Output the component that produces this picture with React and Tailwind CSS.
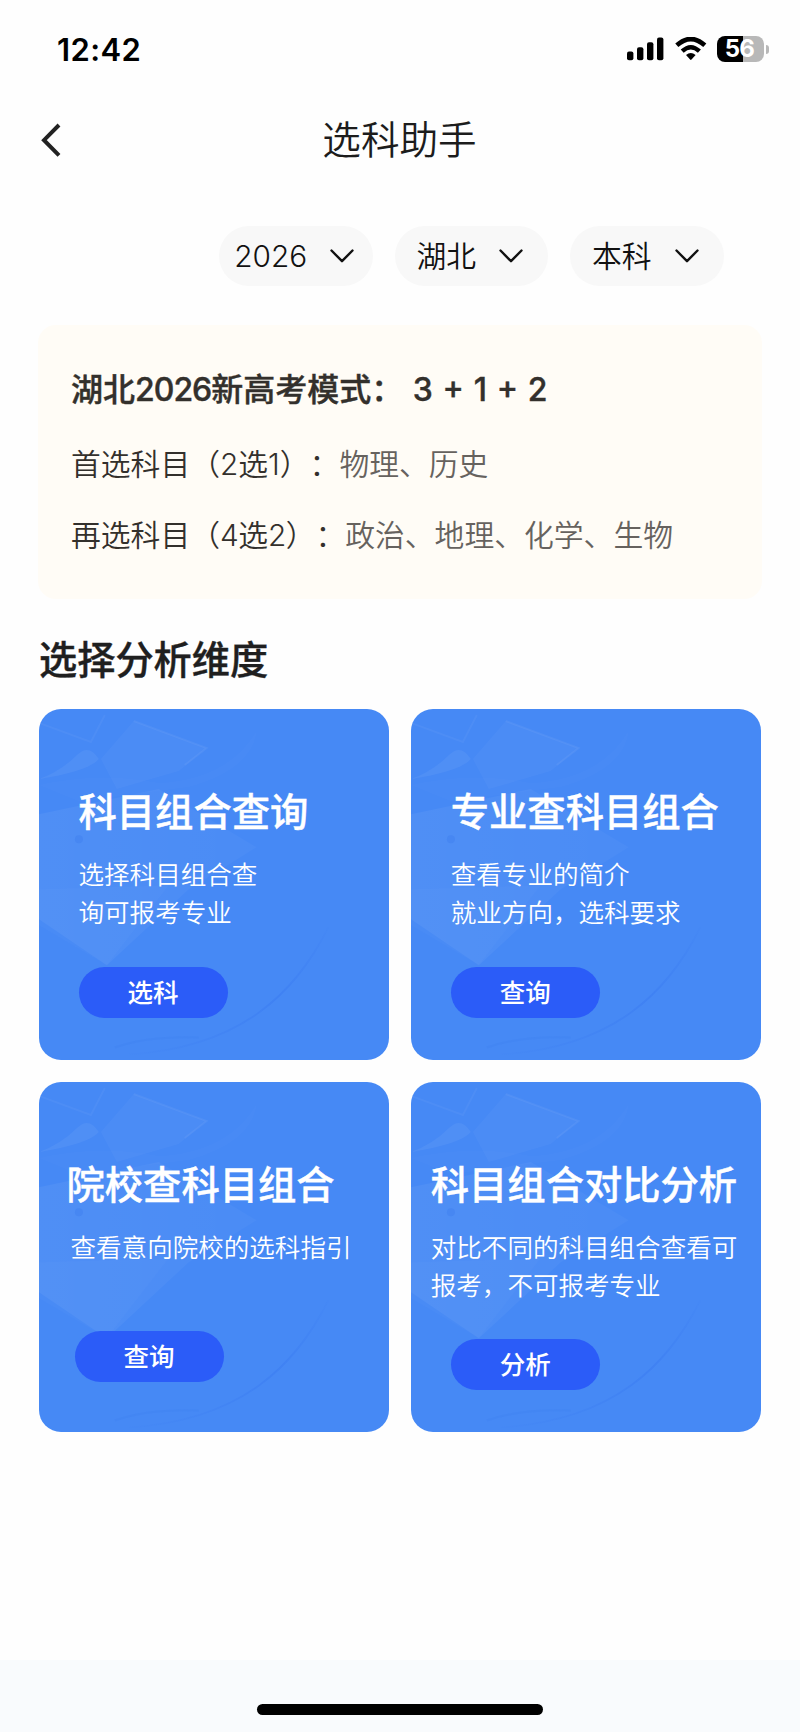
import React from 'react';

const filters = ['2026', '湖北', '本科'];

const cards = [
  {
    title: '科目组合查询',
    lines: ['选择科目组合查', '询可报考专业'],
    action: '选科',
    titleClass: 'ml-10',
    descClass: 'ml-10',
    buttonClass: 'ml-10 mt-[34px]',
  },
  {
    title: '专业查科目组合',
    lines: ['查看专业的简介', '就业方向，选科要求'],
    action: '查询',
    titleClass: 'ml-10',
    descClass: 'ml-10',
    buttonClass: 'ml-10 mt-[34px]',
  },
  {
    title: '院校查科目组合',
    lines: ['查看意向院校的选科指引'],
    action: '查询',
    titleClass: 'ml-7',
    descClass: 'ml-8',
    buttonClass: 'ml-9 mt-[64px]',
  },
  {
    title: '科目组合对比分析',
    lines: ['对比不同的科目组合查看可', '报考，不可报考专业'],
    action: '分析',
    titleClass: 'ml-5',
    descClass: 'ml-5',
    buttonClass: 'ml-10 mt-[34px]',
  },
];

function StatusBar() {
  return (
    <div className="h-[98px] pl-[57px] pr-[31px] flex items-center justify-between text-black">
      <span className="text-[31px] font-semibold leading-none tracking-[0.4px]">12:42</span>
      <div className="flex items-center">
        <svg width="37" height="24" viewBox="0 0 37 24">
          <rect x="0" y="14.5" width="6.4" height="8.7" rx="2" />
          <rect x="10" y="10.2" width="6.4" height="13" rx="2" />
          <rect x="20" y="5.2" width="6.4" height="18" rx="2" />
          <rect x="30" y="0.4" width="6.4" height="22.8" rx="2" />
        </svg>
        <svg className="ml-[11px]" width="32" height="24" viewBox="0 0 32 24">
          <path d="M1.8 8.3 Q15.8 -4.3 29.8 8.3" fill="none" stroke="#000" strokeWidth="4.6" />
          <path d="M7.2 14.2 Q15.8 6.2 24.4 14.2" fill="none" stroke="#000" strokeWidth="4.4" />
          <path d="M11 17.9 Q15.8 14.2 20.6 17.9 L16.5 22.6 Q15.8 23.3 15.1 22.6 Z" />
        </svg>
        <div className="ml-[10px] w-[47px] h-[26px] rounded-[8px] bg-[linear-gradient(to_right,#000_56%,#b8b8b8_56%)] flex items-center justify-center pr-[2px] text-white text-[24px] font-bold leading-none tracking-[-0.8px]">
          56
        </div>
        <div className="ml-[2px] w-[3px] h-[9px] rounded-r-full bg-[#b8b8b8]" />
      </div>
    </div>
  );
}

function ChevronDown() {
  return (
    <svg width="24" height="14" viewBox="0 0 24 14" fill="none" stroke="#111" strokeWidth="2.4" strokeLinecap="round" strokeLinejoin="round">
      <path d="M1.5 1.5 L12 12.2 L22.5 1.5" />
    </svg>
  );
}

// Faint graduation cap and swoosh behind the card text
function CardArt() {
  return (
    <svg className="absolute inset-0 w-full h-full" viewBox="0 0 351 350" preserveAspectRatio="none" fill="none">
      <defs>
        <linearGradient id="swoosh" x1="0" y1="1" x2="1" y2="0">
          <stop offset="0" stopColor="#2563eb" stopOpacity="0.02" />
          <stop offset="0.6" stopColor="#2563eb" stopOpacity="0.2" />
          <stop offset="1" stopColor="#2563eb" stopOpacity="0.03" />
        </linearGradient>
        <linearGradient id="fold" x1="0" y1="0" x2="1" y2="0">
          <stop offset="0" stopColor="#fff" stopOpacity="0.05" />
          <stop offset="1" stopColor="#fff" stopOpacity="0.025" />
        </linearGradient>
      </defs>
      <path d="M95 12 L168 39 L140 62 L78 80 L62 50 Z" fill="#fff" fillOpacity="0.03" />
      <path d="M95 12 L168 39 L146 56" stroke="#fff" strokeOpacity="0.05" strokeWidth="2" />
      <path d="M0 14 L52 33 L66 6" stroke="#fff" strokeOpacity="0.04" strokeWidth="2" />
      <path d="M0 70 Q22 62 38 46 Q50 34 60 50 Q50 62 0 70 Z" fill="#fff" fillOpacity="0.05" />
      <path d="M0 76 Q60 62 120 74 Q190 70 218 22 Q214 60 150 78 L40 92 Z" fill="#fff" fillOpacity="0.015" />
      <path d="M0 105 L120 80 L218 138 L150 180 L68 256 L0 210 Z" fill="url(#fold)" />
      <path d="M0 180 L130 176 L68 256 L0 216 Z" fill="#fff" fillOpacity="0.02" />
      <circle cx="40" cy="130" r="4" fill="#1f5fe0" fillOpacity="0.14" />
      <path d="M290 218 C258 282 204 338 90 345" stroke="url(#swoosh)" strokeWidth="2" />
      <path d="M76 338 Q110 326 160 328" stroke="#2563eb" strokeOpacity="0.08" strokeWidth="2" />
    </svg>
  );
}

function DimensionCard({ card }) {
  return (
    <div className="relative h-[350.5px] rounded-[22px] overflow-hidden bg-[#4689f5] text-white">
      <CardArt />
      <div className="relative flex flex-col items-start pt-[79px]">
        <h3 className={`text-[38.3px] leading-[48px] font-medium whitespace-nowrap [-webkit-text-stroke:0.4px] ${card.titleClass}`}>{card.title}</h3>
        <div className={`mt-[20px] text-[25.55px] leading-[38.4px] font-[350] whitespace-nowrap ${card.descClass}`}>
          {card.lines.map((line) => (
            <p key={line}>{line}</p>
          ))}
        </div>
        <button className={`w-[149px] h-[51px] rounded-full bg-[#2b5cf8] text-[25.5px] leading-none font-medium ${card.buttonClass}`}>
          {card.action}
        </button>
      </div>
    </div>
  );
}

export default function App() {
  return (
    <div className="w-[800px] h-[1732px] bg-[#fefefe] flex flex-col overflow-hidden font-[Inter,'Noto_Sans_CJK_SC',sans-serif] [text-spacing-trim:space-all]">
      <StatusBar />

      <header className="h-[84px] grid grid-cols-[1fr_auto_1fr] items-center">
        <svg className="ml-[40px]" width="22" height="34" viewBox="0 0 22 34" fill="none" stroke="#222" strokeWidth="4">
          <path d="M19 2 L4 17.2 L19 32.4" />
        </svg>
        <h1 className="pt-px pr-px text-[38.6px] leading-none font-[350] text-[#1c1c1c]">选科助手</h1>
        <span />
      </header>

      <div className="mt-[44px] ml-[219px] flex gap-[22px]">
        {filters.map((label) => (
          <button key={label} className="w-[153.5px] h-[60px] rounded-full bg-[#f8f8f8] flex items-center justify-center gap-[23px] pr-[3px] text-[29.8px] font-[350] text-[#111]">
            {label}
            <ChevronDown />
          </button>
        ))}
      </div>

      <section className="mt-[39px] mx-[38px] h-[274px] rounded-[18px] bg-[#fffcf6] pl-[33px] pt-[41px] text-[#33302c] whitespace-nowrap">
        <h2 className="text-[32px] leading-[48px] font-medium [-webkit-text-stroke:0.4px]">
          湖北<span className="tracking-[-1px]">2026</span>新高考模式： <span className="ml-px [word-spacing:1.2px]">3 + 1 + 2</span>
        </h2>
        <p className="mt-[28px] text-[29.8px] leading-[44px] font-[350]">
          首选科目（2选1）：<span className="text-[#66625e]">物理、历史</span>
        </p>
        <p className="mt-[27px] text-[29.8px] leading-[44px] font-[350]">
          再选科目（<span className="tracking-[-0.6px]">4</span>选<span className="tracking-[-0.6px]">2</span>）：<span className="text-[#66625e]">政治、地理、化学、生物</span>
        </p>
      </section>

      <h2 className="mt-[37px] ml-[39px] text-[38.2px] leading-[48px] font-medium text-[#1f1f1f] [-webkit-text-stroke:0.4px]">选择分析维度</h2>

      <main className="mt-[25px] ml-[38.5px] mr-[39px] grid grid-cols-2 gap-x-[22px] gap-y-[22px]">
        {cards.map((card) => (
          <DimensionCard key={card.title} card={card} />
        ))}
      </main>

      <footer className="mt-auto h-[72px] bg-[#f9fbfd] pt-[44px] flex justify-center items-start">
        <div className="w-[286px] h-[11px] rounded-full bg-black" />
      </footer>
    </div>
  );
}
